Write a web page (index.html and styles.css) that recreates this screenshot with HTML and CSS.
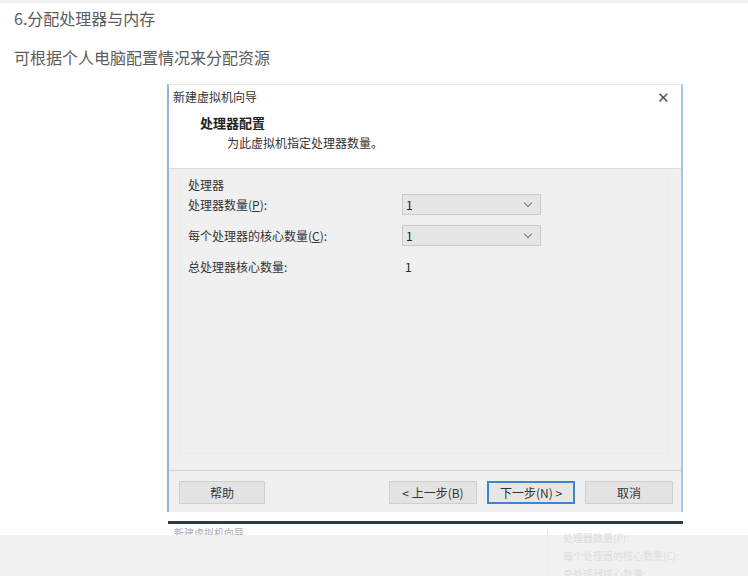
FILE: index.html
```html
<!DOCTYPE html>
<html lang="zh-CN">
<head>
    <meta charset="UTF-8">
    <title>分配处理器与内存</title>
    <link rel="stylesheet" href="styles.css">
</head>
<body>
    <div class="page">
        <div class="article">
            <p class="step">6.分配处理器与内存</p>
            <p class="note">可根据个人电脑配置情况来分配资源</p>
        </div>

        <div class="dialog">
            <div class="titlebar">
                <span class="title">新建虚拟机向导</span>
                <span class="close">✕</span>
            </div>
            <div class="header">
                <div class="header-title">处理器配置</div>
                <div class="header-sub">为此虚拟机指定处理器数量。</div>
            </div>
            <div class="body">
                <div class="group">
                    <div class="group-label">处理器</div>
                    <div class="row">
                        <span class="label">处理器数量(<u>P</u>):</span>
                        <div class="select"><span>1</span><span class="chev"></span></div>
                    </div>
                    <div class="row">
                        <span class="label">每个处理器的核心数量(<u>C</u>):</span>
                        <div class="select"><span>1</span><span class="chev"></span></div>
                    </div>
                    <div class="row plain">
                        <span class="label">总处理器核心数量:</span>
                        <span class="value">1</span>
                    </div>
                </div>
            </div>
            <div class="footer">
                <button class="btn">帮助</button>
                <div class="spacer"></div>
                <button class="btn">&lt; 上一步(<u>B</u>)</button>
                <button class="btn primary">下一步(<u>N</u>) &gt;</button>
                <button class="btn">取消</button>
            </div>
        </div>

        <div class="dialog-next">
            <span>新建虚拟机向导</span>
        </div>

        <div class="bottom-band">
            <div class="ghost">
                <div>处理器数量(P):</div>
                <div>每个处理器的核心数量(C):</div>
                <div>总处理器核心数量:</div>
            </div>
        </div>
    </div>
</body>
</html>
```

FILE: styles.css
```css
body {
    margin: 0;
    padding: 0;
    background: #ffffff;
    font-family: "Noto Sans CJK SC", "Noto Sans", sans-serif;
}
.page {
    height: 576px;
    overflow: hidden;
    display: flex;
    flex-direction: column;
    border-top: 3px solid #f0f0f0;
    box-sizing: border-box;
}
.article {
    padding: 3px 0 0 14px;
    color: #5c5c5c;
    font-size: 16px;
}
.article p {
    margin: 0;
    line-height: 24px;
}
.article .note {
    margin-top: 15px;
}

/* wizard dialog */
.dialog {
    margin: 15px 0 0 167px;
    width: 516px;
    height: 428px;
    flex-shrink: 0;
    box-sizing: border-box;
    border-left: 2px solid #8fb4d8;
    border-right: 2px solid #a9c7e3;
    border-top: 1px solid #e4e4e4;
    display: flex;
    flex-direction: column;
    font-size: 12px;
    color: #222;
}
.titlebar {
    height: 23px;
    display: flex;
    align-items: center;
    justify-content: space-between;
    padding: 0 11px 0 4px;
    background: #fff;
}
.title {
    color: #333;
}
.close {
    font-size: 15px;
    color: #555;
}
.header {
    height: 60px;
    background: #fff;
    border-bottom: 1px solid #dcdcdc;
    padding-left: 31px;
}
.header-title {
    font-weight: bold;
    font-size: 13px;
    margin-top: 6px;
    line-height: 17px;
}
.header-sub {
    padding-left: 27px;
    margin-top: 3px;
    line-height: 17px;
    color: #333;
}
.body {
    flex: 1;
    background: #f0f0f0;
    padding: 5px 12px 16px 11px;
    border-bottom: 1px solid #d2d2d2;
}
.group {
    height: 100%;
    box-sizing: border-box;
    border: 1px solid #ebebeb;
    padding: 1px 0 0 7px;
}
.group-label {
    line-height: 18px;
    color: #333;
}
.row {
    display: flex;
    align-items: center;
    height: 21px;
    margin-bottom: 10px;
}
.row.plain {
    margin-top: 0;
}
.label {
    width: 214px;
    color: #333;
}
.select {
    width: 139px;
    height: 21px;
    box-sizing: border-box;
    border: 1px solid #c9c9c9;
    background: #e6e6e6;
    display: flex;
    align-items: center;
    justify-content: space-between;
    padding: 0 9px 0 3px;
}
.chev {
    width: 5px;
    height: 5px;
    border-right: 1px solid #777;
    border-bottom: 1px solid #777;
    transform: rotate(45deg);
    margin-top: -4px;
}
.value {
    padding-left: 3px;
}
.footer {
    height: 39px;
    background: #f0f0f0;
    display: flex;
    align-items: center;
    padding: 2px 8px 0 10px;
    gap: 10px;
}
.spacer {
    flex: 1;
}
.btn {
    width: 88px;
    height: 23px;
    font-family: inherit;
    font-size: 12px;
    color: #333;
    background: #e3e3e3;
    border: 1px solid #cfcfcf;
    padding: 0;
}
.btn:first-child {
    width: 86px;
}
.btn.primary {
    border: 2px solid #3b86d1;
    background: #e6e6e6;
}
.btn u {
    text-decoration: none;
}

/* next dialog, cut off */
.dialog-next {
    margin: 9px 0 0 168px;
    width: 515px;
    height: 14px;
    flex-shrink: 0;
    overflow: hidden;
    border-top: 3px solid #2d3a48;
    font-size: 10px;
    color: #aaa;
    line-height: 18px;
    padding-left: 6px;
    box-sizing: border-box;
}
.bottom-band {
    flex: 1;
    background: #f1f1f1;
}
.ghost {
    margin-left: 547px;
    height: 100%;
    border-left: 1px solid #ebebeb;
    padding-left: 15px;
    font-size: 10px;
    color: #dedede;
    line-height: 18px;
    margin-top: -6px;
}
```
